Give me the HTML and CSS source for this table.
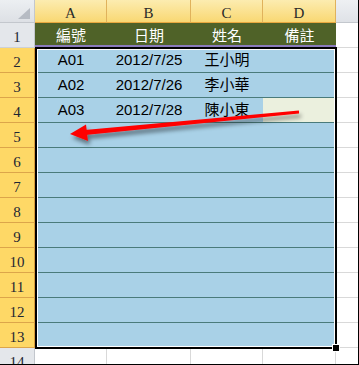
FILE: index.html
```html
<!DOCTYPE html>
<html lang="zh-Hant">
<head>
<meta charset="utf-8">
<title>Sheet</title>
<link rel="stylesheet" href="styles.css">
</head>
<body>
<div class="sheet">
  <div class="grid">
    <div class="corner"><svg width="12" height="11" viewBox="0 0 12 11"><polygon points="12,0 12,11 0,11" fill="#b6bbc3"/></svg></div>
    <div class="ch sel">A</div>
    <div class="ch sel">B</div>
    <div class="ch sel">C</div>
    <div class="ch sel">D</div>
    <div class="ch off"></div>

    <div class="rh off">1</div>
    <div class="t">編號</div>
    <div class="t">日期</div>
    <div class="t">姓名</div>
    <div class="t">備註</div>
    <div class="e"></div>

    <div class="rh sel">2</div>
    <div class="c">A01</div>
    <div class="c">2012/7/25</div>
    <div class="c cjk">王小明</div>
    <div class="c"></div>
    <div class="e"></div>

    <div class="rh sel">3</div>
    <div class="c">A02</div>
    <div class="c">2012/7/26</div>
    <div class="c cjk">李小華</div>
    <div class="c"></div>
    <div class="e"></div>

    <div class="rh sel">4</div>
    <div class="c">A03</div>
    <div class="c">2012/7/28</div>
    <div class="c cjk">陳小東</div>
    <div class="c note"></div>
    <div class="e"></div>

    <div class="rh sel">5</div><div class="c"></div><div class="c"></div><div class="c"></div><div class="c"></div><div class="e"></div>
    <div class="rh sel">6</div><div class="c"></div><div class="c"></div><div class="c"></div><div class="c"></div><div class="e"></div>
    <div class="rh sel">7</div><div class="c"></div><div class="c"></div><div class="c"></div><div class="c"></div><div class="e"></div>
    <div class="rh sel">8</div><div class="c"></div><div class="c"></div><div class="c"></div><div class="c"></div><div class="e"></div>
    <div class="rh sel">9</div><div class="c"></div><div class="c"></div><div class="c"></div><div class="c"></div><div class="e"></div>
    <div class="rh sel">10</div><div class="c"></div><div class="c"></div><div class="c"></div><div class="c"></div><div class="e"></div>
    <div class="rh sel">11</div><div class="c"></div><div class="c"></div><div class="c"></div><div class="c"></div><div class="e"></div>
    <div class="rh sel">12</div><div class="c"></div><div class="c"></div><div class="c"></div><div class="c"></div><div class="e"></div>
    <div class="rh sel">13</div><div class="c"></div><div class="c"></div><div class="c"></div><div class="c"></div><div class="e"></div>

    <div class="rh off">14</div><div class="w"></div><div class="w"></div><div class="w"></div><div class="w"></div><div class="w last"></div>
  </div>

  <div class="selection"><span class="handle"></span></div>

  <svg class="arrow" width="359" height="365" viewBox="0 0 359 365">
    <defs>
      <filter id="sh" x="-10%" y="-100%" width="130%" height="400%">
        <feDropShadow dx="2" dy="4" stdDeviation="2" flood-color="#000" flood-opacity="0.45"/>
      </filter>
    </defs>
    <g filter="url(#sh)">
      <polygon points="298.9,110.4 299.1,113.6 85.2,134.9 84.8,129.9" fill="#ff0000"/>
      <polygon points="70,134 86,124.5 88,141" fill="#ff0000"/>
    </g>
  </svg>
</div>
</body>
</html>
```
FILE: styles.css
```css
* {
  box-sizing: border-box;
}

html,
body {
  margin: 0;
  padding: 0;
  background: #ffffff;
}

.sheet {
  position: relative;
  width: 359px;
  height: 365px;
  border-right: 1px solid #000000;
  border-bottom: 1px solid #000000;
  overflow: hidden;
  background: #ffffff;
}

.grid {
  display: grid;
  grid-template-columns: 35px 72px 84px 72px 73px 22px;
  grid-template-rows: 23px;
  grid-auto-rows: 25px;
}

.corner {
  display: flex;
  justify-content: flex-end;
  align-items: flex-end;
  padding: 0 4px 3px 0;
  background: linear-gradient(#eceff2, #dde0e5);
  border-right: 1px solid #c3c7cd;
  border-bottom: 1px solid #c3c7cd;
}

.corner svg {
  display: block;
}

.ch {
  display: flex;
  justify-content: center;
  align-items: flex-end;
  font-family: "Liberation Serif", serif;
  font-size: 15px;
  line-height: 1.15;
  color: #2a2a2a;
}

.ch.sel {
  background: linear-gradient(#fcecb0, #f9d873);
  border-right: 1px solid #e0b25c;
  border-bottom: 1px solid #e9a83f;
}

.ch.off {
  background: linear-gradient(#eef0f3, #dfe2e7);
  border-bottom: 1px solid #c3c7cd;
}

.rh {
  display: flex;
  justify-content: center;
  align-items: flex-end;
  padding-bottom: 1px;
  font-family: "Liberation Serif", serif;
  font-size: 15px;
  line-height: 1.15;
  color: #1e2633;
}

.rh.sel {
  background: #fed866;
  border-right: 1px solid #d99d3c;
  border-bottom: 1px solid #dca54a;
}

.rh.off {
  background: #e4e7eb;
  border-right: 1px solid #c3c7cd;
  border-bottom: 1px solid #cdd1d6;
}

.t {
  background: #4f6228;
  color: #ffffff;
  font-family: "Noto Sans CJK TC", sans-serif;
  font-size: 15px;
  line-height: 24px;
  text-align: center;
  border-bottom: 3px solid #8a7bbb;
  overflow: hidden;
}

.c {
  background: #a9d1e7;
  border-bottom: 1px solid #4a7b7b;
  font-family: "Liberation Sans", sans-serif;
  font-size: 15px;
  line-height: 24px;
  text-align: center;
  color: #000000;
  overflow: hidden;
}

.c.cjk {
  font-family: "Noto Sans CJK TC", sans-serif;
  line-height: 22px;
}

.c.note {
  background: #ebf0de;
}

.e {
  background: #ffffff;
  border-bottom: 1px solid #d9d9d9;
}

.w {
  background: #ffffff;
  border-right: 1px solid #d9d9d9;
}

.w.last {
  border-right: none;
}

.selection {
  position: absolute;
  left: 35px;
  top: 47px;
  width: 302px;
  height: 302px;
  border: 2px solid #000000;
  box-shadow: inset 0 0 0 1px #ffffff;
}

.handle {
  position: absolute;
  right: -4px;
  bottom: -4px;
  width: 6px;
  height: 6px;
  background: #000000;
  outline: 1px solid #ffffff;
}

.arrow {
  position: absolute;
  left: 0;
  top: 0;
  pointer-events: none;
}
```
